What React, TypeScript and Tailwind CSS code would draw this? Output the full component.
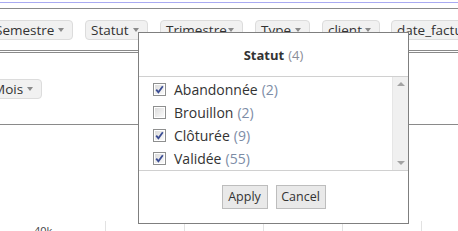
import React from "react";

const font = { fontFamily: '"Open Sans", "DejaVu Sans", sans-serif' };

function Caret() {
  return <span className="inline-block shrink-0 w-0 h-0 border-l-[3px] border-r-[3px] border-t-[4px] border-l-transparent border-r-transparent border-t-[#8a8a8a]" />;
}

function Pill({ label, w, className = "" }: { label: string; w: string; className?: string }) {
  return (
    <div className={`flex items-center justify-between h-[20px] pl-[5px] pr-[8px] rounded-[4px] bg-[#f1f1f1] border border-[#dcdcdc] text-[13.5px] text-[#333] shrink-0 overflow-hidden whitespace-nowrap ${w} ${className}`}>
      <span>{label}</span>
      <Caret />
    </div>
  );
}

function Box({ checked }: { checked: boolean }) {
  return (
    <svg width="13" height="13" viewBox="0 0 13 13" className="shrink-0">
      <defs>
        <linearGradient id={checked ? "gc" : "gu"} x1="0" y1="0" x2="1" y2="1">
          <stop offset="0" stopColor="#dcdcdc" />
          <stop offset="1" stopColor="#fafafa" />
        </linearGradient>
      </defs>
      <rect x="0.5" y="0.5" width="12" height="12" fill="#fff" stroke="#8e8f8f" />
      <rect x="2" y="2" width="9" height="9" fill={`url(#${checked ? "gc" : "gu"})`} />
      {checked && <path d="M3.2 6.6 L5.4 9.2 L9.8 3.2" fill="none" stroke="#3b4d94" strokeWidth="1.8" />}
    </svg>
  );
}

const items = [
  { label: "Abandonnée", n: 2, c: true },
  { label: "Brouillon", n: 2, c: false },
  { label: "Clôturée", n: 9, c: true },
  { label: "Validée", n: 55, c: true },
];

export default function App() {
  return (
    <div className="relative w-[458px] h-[231px] overflow-hidden bg-white" style={font}>
      <div className="h-[2px]" />
      <div className="h-px bg-[#a9aaf2]" />
      <div className="h-[5px]" />
      <div className="h-px bg-[#8a8a8a]" />
      <div className="flex gap-[12px] pt-[11px] ml-[-11px]">
        <Pill label="Semestre" w="w-[84px]" />
        <Pill label="Statut" w="w-[63px]" />
        <Pill label="Trimestre" w="w-[83px]" />
        <Pill label="Type" w="w-[55px]" />
        <Pill label="client" w="w-[58px]" />
        <Pill label="date_facture" w="w-[120px]" className="ml-[-1px]" />
      </div>
      <div className="h-[10px]" />
      <div className="h-px bg-[#8a8a8a]" />
      <div className="h-px" />
      <div className="h-px bg-[#8a8a8a]" />
      <div className="flex pt-[26px] ml-[-13px]">
        <Pill label="Mois" w="w-[55px]" />
      </div>
      <div className="h-[25px]" />
      <div className="h-px bg-[#8a8a8a]" />
      <div className="h-[96px]" />
      <div className="flex h-[12px]">
        <div className="w-[105px] pl-[34px] pt-[4px] text-[11px] leading-[11px] text-[#444]">40k</div>
        <div className="w-[79px] border-l border-[#e2e2e2]" />
        <div className="w-[79px] border-l border-[#e2e2e2]" />
        <div className="w-[79px] border-l border-[#e2e2e2]" />
        <div className="w-[79px] border-l border-[#e2e2e2]" />
        <div className="flex-1 border-l border-[#e2e2e2]" />
      </div>

      <div className="absolute left-[138px] top-[32px] w-[271px] h-[192px] bg-white border border-[#7f7f7f] flex flex-col">
        <div className="h-[44px] pt-[2px] flex items-center justify-center text-[13px] text-[#333] border-b border-[#d0d0d0]">
          <span className="font-bold">Statut</span>
          <span className="ml-[4px] text-[#8a8d98]">(4)</span>
        </div>
        <div className="flex h-[94px] border-b border-[#d0d0d0]">
          <div className="flex-1 pt-[1px] pl-[14px]">
            {items.map((it) => (
              <div key={it.label} className="flex items-center h-[23px] text-[14px] text-[#333]">
                <Box checked={it.c} />
                <span className="ml-[8px]">{it.label}</span>
                <span className="ml-[4px] text-[#7d8ca6]">({it.n})</span>
              </div>
            ))}
          </div>
          <div className="w-[16px] bg-[#f0f0f0] border-l border-[#e6e6e6] flex flex-col items-center justify-between py-[5px]">
            <span className="inline-block w-0 h-0 border-l-[4px] border-r-[4px] border-b-[4px] border-l-transparent border-r-transparent border-b-[#a3a3a3]" />
            <span className="inline-block w-0 h-0 border-l-[4px] border-r-[4px] border-t-[4px] border-l-transparent border-r-transparent border-t-[#a3a3a3]" />
          </div>
        </div>
        <div className="flex-1 flex items-center justify-center gap-[8px]">
          <button className="w-[46px] h-[24px] bg-[#e9e9e9] border border-[#bdbdbd] text-[12.5px] text-[#333]">Apply</button>
          <button className="w-[50px] h-[24px] bg-[#e9e9e9] border border-[#bdbdbd] text-[12.5px] text-[#333]">Cancel</button>
        </div>
      </div>
    </div>
  );
}
